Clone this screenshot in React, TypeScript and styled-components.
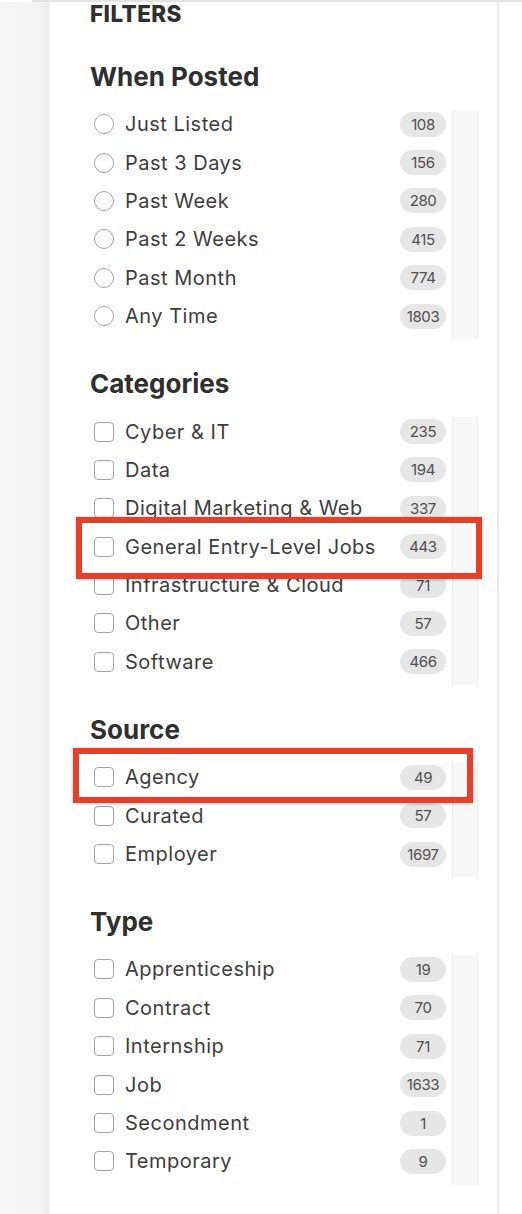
import React from 'react';
import styled, { createGlobalStyle } from 'styled-components';

const GlobalStyle = createGlobalStyle`
  html, body {
    margin: 0;
    padding: 0;
    background: #ffffff;
  }
  body {
    font-family: Inter, "Noto Sans", "Liberation Sans", sans-serif;
    color: #3a3a3a;
  }
`;

const Page = styled.div`
  width: 522px;
  min-height: 1214px;
  display: flex;
  flex-direction: column;
  position: relative;
  overflow: hidden;
`;

const TopRule = styled.div`
  height: 2px;
  margin-left: 32px;
  background: #e3e3e3;
`;

const Body = styled.div`
  flex: 1;
  display: flex;
  background: linear-gradient(to right, #f7f7f7 0px, #f3f3f3 40px, #ececec 49px, #ffffff 50px);
  padding-left: 50px;
`;

const Panel = styled.aside`
  width: 449px;
  box-sizing: border-box;
  background: #fff;
  border-right: 2px solid #ebebeb;
  padding: 0 19px 40px 40px;
`;

const Title = styled.div`
  font-size: 22.5px;
  font-weight: 800;
  line-height: 24px;
  color: #2f2f2f;
  letter-spacing: 0.4px;
  padding-bottom: 6px;
`;

const Heading = styled.h3`
  margin: 29px 0 12px;
  font-size: 26px;
  font-weight: 700;
  line-height: 32px;
  color: #2f2f2f;
`;

const List = styled.div`
  display: grid;
  grid-template-columns: 1fr 26px;
  column-gap: 6px;
  margin-bottom: 28px;
`;

const Items = styled.div`
  display: flex;
  flex-direction: column;
  padding-bottom: 4px;
`;

const Track = styled.div`
  margin-top: 5px;
  background: #f8f8f8;
  border-left: 1px solid #ececec;
  border-right: 1px solid #ececec;
`;

const Row = styled.label`
  height: 38.4px;
  display: flex;
  align-items: center;
  padding-left: 4px;
  cursor: pointer;
`;

const Box = styled.span<{ $round: boolean }>`
  width: 18px;
  height: 18px;
  flex: none;
  border: 1.5px solid #a3a3a3;
  border-radius: ${p => (p.$round ? '50%' : '4px')};
  background: #fff;
`;

const Label = styled.span`
  flex: 1;
  margin-left: 11px;
  font-size: 20px;
  letter-spacing: 0.5px;
  line-height: 24px;
  color: #3d3d3d;
  white-space: nowrap;
`;

const Count = styled.span`
  width: 46px;
  height: 25px;
  flex: none;
  display: flex;
  align-items: center;
  justify-content: center;
  border-radius: 13px;
  background: #e6e6e6;
  color: #505050;
  font-size: 15px;
  letter-spacing: -0.4px;
`;

const Callout = styled.div<{ $x: number; $y: number; $w: number; $h: number }>`
  position: absolute;
  left: ${p => p.$x}px;
  top: ${p => p.$y}px;
  width: ${p => p.$w}px;
  height: ${p => p.$h}px;
  box-sizing: border-box;
  border: 6px solid #e6402b;
  box-shadow: 0 1px 3px rgba(0, 0, 0, 0.25);
  pointer-events: none;
`;

type Option = [string, number];

const groups: { title: string; round?: boolean; options: Option[] }[] = [
  {
    title: 'When Posted',
    round: true,
    options: [
      ['Just Listed', 108],
      ['Past 3 Days', 156],
      ['Past Week', 280],
      ['Past 2 Weeks', 415],
      ['Past Month', 774],
      ['Any Time', 1803],
    ],
  },
  {
    title: 'Categories',
    options: [
      ['Cyber & IT', 235],
      ['Data', 194],
      ['Digital Marketing & Web', 337],
      ['General Entry-Level Jobs', 443],
      ['Infrastructure & Cloud', 71],
      ['Other', 57],
      ['Software', 466],
    ],
  },
  {
    title: 'Source',
    options: [
      ['Agency', 49],
      ['Curated', 57],
      ['Employer', 1697],
    ],
  },
  {
    title: 'Type',
    options: [
      ['Apprenticeship', 19],
      ['Contract', 70],
      ['Internship', 71],
      ['Job', 1633],
      ['Secondment', 1],
      ['Temporary', 9],
    ],
  },
];

export default function App() {
  return (
    <Page>
      <GlobalStyle />
      <TopRule />
      <Body>
        <Panel>
          <Title>FILTERS</Title>
          {groups.map(g => (
            <section key={g.title}>
              <Heading>{g.title}</Heading>
              <List>
                <Items>
                  {g.options.map(([name, count]) => (
                    <Row key={name}>
                      <Box $round={!!g.round} />
                      <Label>{name}</Label>
                      <Count>{count}</Count>
                    </Row>
                  ))}
                </Items>
                <Track />
              </List>
            </section>
          ))}
        </Panel>
      </Body>
      <Callout $x={76} $y={517} $w={406} $h={62} />
      <Callout $x={73} $y={748} $w={400} $h={55} />
    </Page>
  );
}
